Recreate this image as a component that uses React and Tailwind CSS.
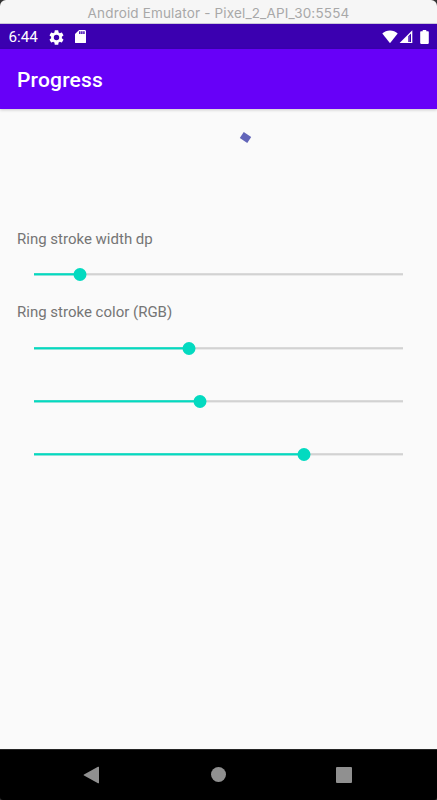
import React from "react";

function Slider({ value, label }) {
  return (
    <div role="slider" aria-label={label} aria-valuenow={value} className="relative mx-[34px] flex h-[13px] items-center">
      <svg className="h-[13px] w-full" aria-hidden="true">
        <rect y="5.200" width="100%" height="2.200" fill="#d2d2d2" />
        <rect y="5.200" width={`${value}%`} height="2.200" fill="#03dac0" />
      </svg>
      <div
        className="absolute top-0 size-[13px] -translate-x-1/2 rounded-full bg-[#03dac0]"
        style={{ left: `${value}%` }}
      />
    </div>
  );
}

function StatusBar() {
  return (
    <div className="flex h-[25px] items-center bg-[#3b00b0] pl-[8.5px] pr-[8px] text-white">
      <span className="w-[40px] pt-[2px] text-[15.2px] leading-[23px]">6:44</span>
      <svg className="mt-[1px] size-[15px]" viewBox="2 2 20 20" fill="currentColor">
        <path d="M19.14 12.94c.04-.3.06-.61.06-.94 0-.32-.02-.64-.07-.94l2.03-1.58a.49.49 0 0 0 .12-.61l-1.92-3.32a.49.49 0 0 0-.59-.22l-2.39.96a7 7 0 0 0-1.62-.94l-.36-2.54a.48.48 0 0 0-.48-.41h-3.84a.48.48 0 0 0-.47.41l-.36 2.54c-.59.24-1.13.57-1.62.94l-2.39-.96a.48.48 0 0 0-.59.22L2.74 8.87a.48.48 0 0 0 .12.61l2.03 1.58c-.05.3-.09.63-.09.94s.02.64.07.94l-2.03 1.58a.49.49 0 0 0-.12.61l1.92 3.32c.12.22.37.29.59.22l2.39-.96c.5.38 1.03.7 1.62.94l.36 2.54c.05.24.24.41.48.41h3.84c.24 0 .44-.17.47-.41l.36-2.54c.59-.24 1.13-.56 1.62-.94l2.39.96c.22.08.47 0 .59-.22l1.92-3.32a.48.48 0 0 0-.12-.61zM12 15.6a3.6 3.6 0 1 1 0-7.2 3.6 3.6 0 0 1 0 7.2z" />
      </svg>
      <svg className="ml-[11.5px] h-[13.5px] w-[11px]" viewBox="4 2 16 20" preserveAspectRatio="none" fill="currentColor">
        <path d="M18 2h-8L4.02 8 4 20c0 1.100.9 2 2 2h12c1.100 0 2-.9 2-2V4c0-1.100-.9-2-2-2zm-6 6h-2V4h2v4zm3 0h-2V4h2v4zm3 0h-2V4h2v4z" />
      </svg>
      <svg className="ml-auto h-[13.5px] w-[16px]" viewBox="0 0 16 13.5" fill="currentColor">
        <path d="M8 13.200.3 3.600C2.400 1.700 5 .6 8 .6s5.600 1.100 7.700 3z" />
      </svg>
      <svg className="ml-[1px] h-[13.5px] w-[14px]" viewBox="0 0 14 13.5">
        <path d="M13.300.3v12.900H.4z" fill="white" />
        <path d="M9.300 6.200l2.700-2.700v8.500H9.300z" fill="#3b00b0" />
        <path d="M10.300 5.800v6.200" stroke="#9a7fd8" strokeWidth=".6" />
      </svg>
      <svg className="ml-[7px] h-[14px] w-[9px]" viewBox="0 0 9 14" fill="currentColor">
        <path d="M2.700 0h3.600v1.300H8a.8.8 0 0 1 .8.8v11a.8.8 0 0 1-.8.800H1a.8.8 0 0 1-.8-.8v-11a.8.8 0 0 1 .8-.8h1.700z" />
      </svg>
    </div>
  );
}

export default function App() {
  return (
    <div className="h-[800px] w-[437px] overflow-hidden bg-[#333333] font-['Roboto','Liberation_Sans',sans-serif]">
      <div className="flex h-full flex-col">
        <div className="h-[24px] rounded-t-[6px] border-b border-[#cbc6d8] bg-[#f6f6f6] text-center font-['Inter','Liberation_Sans',sans-serif] text-[13.5px] leading-[26px] tracking-[0.16px] text-[#a8a8a8]">
          Android Emulator - Pixel_2_API_30:5554
        </div>
        <StatusBar />
        <header className="z-10 flex h-[59.5px] items-center bg-[#6700f8] px-[17px] shadow-[0_1px_3px_rgba(0,0,0,0.2)]">
          <h1 className="pt-[2px] text-[21px] font-medium leading-6 tracking-[0.2px] text-white">Progress</h1>
        </header>
        <main className="flex-1 bg-[#fafafa]">
          <div className="flex h-[120.5px] pl-[241px] pt-[25px]">
            <div className="h-[7px] w-[9px] rotate-[34deg] bg-[#6265b9]" />
          </div>
          <p className="pl-[17px] text-[15px] leading-5 text-[#757575]">Ring stroke width dp</p>
          <div className="mt-[19px]"><Slider value={12.6} label="Ring stroke width" /></div>
          <p className="mt-[21px] pl-[17px] text-[15px] leading-5 text-[#757575]">Ring stroke color (RGB)</p>
          <div className="mt-[19.5px] flex flex-col gap-[40px]">
            <Slider value={41.9} label="Red" />
            <Slider value={45.1} label="Green" />
            <Slider value={73.3} label="Blue" />
          </div>
        </main>
        <nav className="flex h-[51px] items-center rounded-b-[3px] border-t border-[#252525] bg-black pb-[1px] pl-[83px] text-[#909090]">
          <svg className="h-[18px] w-[16px]" viewBox="0 0 16 18" fill="currentColor">
            <path d="M15 .8Q16 .3 16 1.300v15.400q0 1-1 .5L1 9.500Q0 9 1 8.500z" />
          </svg>
          <div className="ml-[112px] size-[15px] rounded-full bg-[#909090]" />
          <div className="ml-[110px] size-[16px] rounded-[1px] bg-[#909090]" />
        </nav>
      </div>
    </div>
  );
}
